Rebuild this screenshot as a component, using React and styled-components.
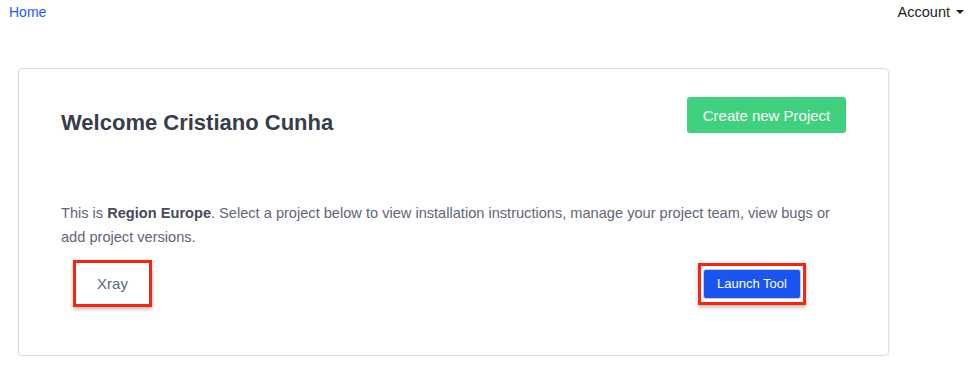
import React from "react";
import styled, { createGlobalStyle } from "styled-components";

const GlobalStyle = createGlobalStyle`
  body {
    margin: 0;
    background: #fff;
    font-family: "Liberation Sans", Arial, sans-serif;
  }
`;

export default function App() {
  return (
    <>
      <GlobalStyle />
      <NavBar>
        <NavLink href="#">Home</NavLink>
        <AccountMenu>
          Account <Caret />
        </AccountMenu>
      </NavBar>
      <Card>
        <Header>
          <Title>Welcome Cristiano Cunha</Title>
          <PrimaryButton>Create new Project</PrimaryButton>
        </Header>
        <Intro>
          This is <strong>Region Europe</strong>. Select a project below to view installation instructions, manage your project team, view bugs or add project versions.
        </Intro>
        <ProjectRow>
          <ProjectName>Xray</ProjectName>
          <Highlight>
            <LaunchButton>Launch Tool</LaunchButton>
          </Highlight>
        </ProjectRow>
      </Card>
    </>
  );
}

const NavBar = styled.nav`
  display: flex;
  justify-content: space-between;
  align-items: center;
  height: 24px;
  padding: 0 14px 0 9px;
  font-size: 14px;
`;

const NavLink = styled.a`
  color: #1a5cff;
  text-decoration: none;
`;

const AccountMenu = styled.div`
  display: flex;
  align-items: center;
  gap: 6px;
  color: #222;
  font-size: 14.5px;
`;

const Caret = styled.span`
  width: 0;
  height: 0;
  border-left: 4px solid transparent;
  border-right: 4px solid transparent;
  border-top: 4px solid #222;
`;

const Card = styled.section`
  width: 871px;
  box-sizing: border-box;
  margin: 44px 0 0 18px;
  padding: 28px 42px 48px;
  border: 1px solid #dcdde3;
  border-radius: 4px;
  box-shadow: 0 1px 2px rgba(60, 70, 120, 0.12);
`;

const Header = styled.div`
  display: flex;
  justify-content: space-between;
  align-items: flex-start;
`;

const Title = styled.h2`
  margin: 13px 0 0;
  font-size: 22px;
  line-height: 26px;
  font-weight: bold;
  color: #363d4c;
`;

const PrimaryButton = styled.button`
  height: 36px;
  width: 159px;
  border: none;
  border-radius: 3px;
  background: #3fd17d;
  color: #fff;
  font-family: inherit;
  font-size: 15px;
  cursor: pointer;
`;

const Intro = styled.p`
  margin: 65px 0 0;
  font-size: 14.6px;
  line-height: 24px;
  color: #5f6678;

  strong {
    color: #454b5b;
  }
`;

const ProjectRow = styled.div`
  display: flex;
  justify-content: space-between;
  align-items: center;
  margin: 11px 40px 0 12px;
`;

const ProjectName = styled.div`
  width: 79px;
  height: 47px;
  box-sizing: border-box;
  display: flex;
  align-items: center;
  justify-content: center;
  border: 3px solid #f5260f;
  box-shadow: 0 2px 4px rgba(0, 0, 0, 0.3);
  font-size: 15px;
  color: #5d6687;
`;

const Highlight = styled.div`
  width: 108px;
  height: 42px;
  box-sizing: border-box;
  display: flex;
  align-items: center;
  justify-content: center;
  border: 3px solid #f5260f;
  box-shadow: 0 2px 4px rgba(0, 0, 0, 0.3);
  background: #fff;
`;

const LaunchButton = styled.button`
  width: 98px;
  height: 30px;
  border: 1px solid #c9ccd6;
  border-radius: 3px;
  background: #1a55f2;
  color: #fff;
  font-family: inherit;
  font-size: 13px;
  cursor: pointer;
`;
